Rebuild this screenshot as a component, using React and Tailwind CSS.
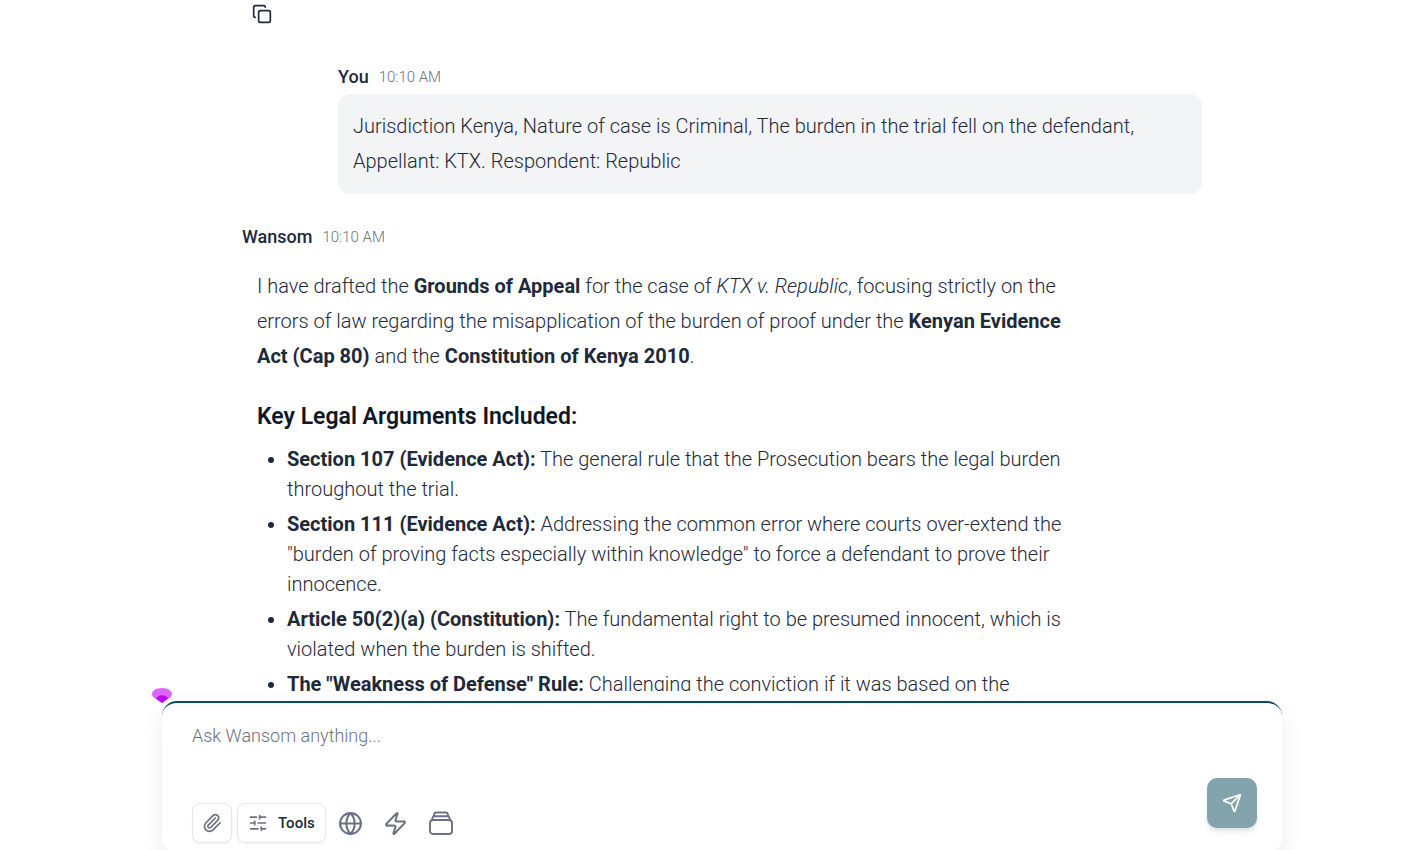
import React, { useState } from "react";
import {
  Copy,
  Globe,
  Paperclip,
  Send,
  SlidersHorizontal,
  Zap,
} from "lucide-react";

const legalArguments = [
  {
    title: "Section 107 (Evidence Act):",
    text: "The general rule that the Prosecution bears the legal burden throughout the trial.",
  },
  {
    title: "Section 111 (Evidence Act):",
    text: 'Addressing the common error where courts over-extend the "burden of proving facts especially within knowledge" to force a defendant to prove their innocence.',
  },
  {
    title: "Article 50(2)(a) (Constitution):",
    text: "The fundamental right to be presumed innocent, which is violated when the burden is shifted.",
  },
  {
    title: 'The "Weakness of Defense" Rule:',
    text: "Challenging the conviction if it was based on the",
  },
];

const VaultIcon = () => (
  <svg
    width="26"
    height="26"
    viewBox="0 0 26 26"
    fill="none"
    stroke="currentColor"
    strokeWidth="1.9"
    strokeLinecap="round"
    strokeLinejoin="round"
  >
    <rect x="2" y="10" width="22" height="14" rx="3" />
    <path d="M3.9 10.2 4.6 7.6A1.8 1.8 0 0 1 6.3 6.2h13.4a1.8 1.8 0 0 1 1.7 1.4l.7 2.6" />
    <path d="M5.8 6.2 6.3 3.8A1.7 1.7 0 0 1 8 2.5h10a1.7 1.7 0 0 1 1.7 1.3l.5 2.4" />
  </svg>
);

const AssistantMarker = () => (
  <svg
    className="absolute -top-[15px] -left-[10px]"
    width="20"
    height="15"
    viewBox="0 0 20 15"
  >
    <path
      d="M10 0C16 0 20 2.8 20 6c0 2.2-1.6 4-4 5l-6 4-6-4C1.6 10 0 8.2 0 6 0 2.8 4 0 10 0Z"
      fill="#d966ff"
    />
    <path
      d="M4 10.5C5.5 8.3 7.5 7.2 10 7.2s4.5 1.1 6 3.3L10 15Z"
      fill="#bf00ff"
    />
  </svg>
);

const MessageHeader = ({ name, time }) => (
  <div className="mb-1 flex h-[26px] items-center gap-[10px]">
    <span className="text-[18px] leading-6 font-medium text-gray-800">
      {name}
    </span>
    <span className="text-[15px] leading-6 text-gray-500">{time}</span>
  </div>
);

const IconButton = ({ label, bordered, children }) => (
  <button
    type="button"
    aria-label={label}
    className={
      bordered
        ? "flex size-10 items-center justify-center rounded-lg border border-gray-200 bg-white text-gray-500 shadow-xs"
        : "flex size-10 items-center justify-center rounded-lg text-gray-500"
    }
  >
    {children}
  </button>
);

const Composer = () => {
  const [prompt, setPrompt] = useState("");

  return (
    <form
      className="relative mx-auto mt-[10px] -mb-[3px] w-full max-w-[1120px] shrink-0 rounded-[15px] border-t-2 border-[#0b4a5c] bg-white pt-[19px] pr-[25px] pb-[10px] pl-[30px] shadow-[0_10px_25px_rgba(0,0,0,0.08)]"
      onSubmit={(e) => e.preventDefault()}
    >
      <AssistantMarker />
      <textarea
        aria-label="Message"
        className="block h-14 w-full resize-none text-[18px] leading-7 text-gray-800 outline-none placeholder:text-gray-500"
        placeholder="Ask Wansom anything..."
        value={prompt}
        onChange={(e) => setPrompt(e.target.value)}
      />
      <div className="flex items-end justify-between">
        <div className="flex gap-[5px]">
          <IconButton label="Attach file" bordered>
            <Paperclip size={20} strokeWidth={2} />
          </IconButton>
          <button
            type="button"
            className="flex h-10 items-center gap-[10px] rounded-lg border border-gray-200 bg-white px-[10px] text-[15px] font-medium text-gray-800 shadow-xs"
          >
            <SlidersHorizontal
              className="text-gray-500"
              size={20}
              strokeWidth={2}
            />
            Tools
          </button>
          <IconButton label="Search the web">
            <Globe size={25} strokeWidth={2} />
          </IconButton>
          <IconButton label="Quick actions">
            <Zap size={25} strokeWidth={2} />
          </IconButton>
          <IconButton label="Vault">
            <VaultIcon />
          </IconButton>
        </div>
        <button
          type="submit"
          aria-label="Send"
          className="mb-[15px] flex size-[50px] items-center justify-center rounded-[10px] bg-[#84a4ad] text-white shadow-md"
        >
          <Send size={20} />
        </button>
      </div>
    </form>
  );
};

export default function App() {
  return (
    <div className="flex h-screen flex-col overflow-hidden bg-white pl-[22px] font-['Roboto',sans-serif] font-light text-gray-800">
      <main className="min-h-0 flex-1 overflow-hidden">
        <div className="mx-auto max-w-[960px]">
          <button
            type="button"
            aria-label="Copy message"
            className="mt-1 ml-[10px] block"
          >
            <Copy size={20} strokeWidth={2} />
          </button>

          <section className="mt-10 ml-auto w-9/10">
            <MessageHeader name="You" time="10:10 AM" />
            <p className="rounded-[12px] bg-gray-100 p-[15px] text-[20px] leading-[35px]">
              Jurisdiction Kenya, Nature of case is Criminal, The burden in the
              trial fell on the defendant, Appellant: KTX. Respondent: Republic
            </p>
          </section>

          <section className="mt-[30px] w-9/10">
            <MessageHeader name="Wansom" time="10:10 AM" />
            <div className="p-[15px] text-[20px]">
              <p className="leading-[35px]">
                I have drafted the{" "}
                <strong className="font-bold">Grounds of Appeal</strong> for the
                case of <em>KTX v. Republic</em>, focusing strictly on the
                errors of law regarding the misapplication of the burden of
                proof under the{" "}
                <strong className="font-bold">
                  Kenyan Evidence Act (Cap 80)
                </strong>{" "}
                and the{" "}
                <strong className="font-bold">
                  Constitution of Kenya 2010
                </strong>
                .
              </p>
              <h3 className="mt-7 mb-3 text-[23px] leading-[30px] font-semibold text-gray-900">
                Key Legal Arguments Included:
              </h3>
              <ul className="list-disc space-y-[5px] pl-[30px] leading-[30px]">
                {legalArguments.map((item) => (
                  <li key={item.title}>
                    <strong className="font-bold">{item.title}</strong>{" "}
                    {item.text}
                  </li>
                ))}
              </ul>
            </div>
          </section>
        </div>
      </main>
      <Composer />
    </div>
  );
}
